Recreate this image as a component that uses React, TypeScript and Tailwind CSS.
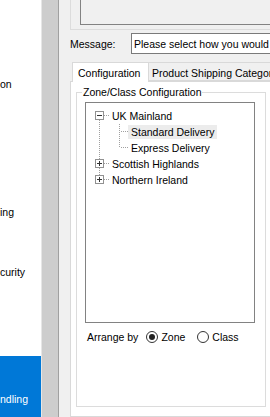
import React from "react";

const font = { fontFamily: '"Liberation Sans", Arial, sans-serif' };

type NodeProps = {
  kind: "minus" | "plus";
  up?: boolean;
  down?: boolean;
};

// expander box + dotted connectors for a top level row
const Expander: React.FC<NodeProps> = ({ kind, up, down }) => (
  <svg width="26" height="16" className="shrink-0">
    {up && <path d="M13.5 0 V3" stroke="#a0a0a0" strokeDasharray="1 1" />}
    {down && <path d="M13.5 12 V16" stroke="#a0a0a0" strokeDasharray="1 1" />}
    <path d="M18 7.5 H24" stroke="#a0a0a0" strokeDasharray="1 1" />
    <rect x="9.5" y="3.5" width="8" height="8" fill="#fff" stroke="#919191" />
    <path d="M11 7.5 H16" stroke="#333" />
    {kind === "plus" && <path d="M13.5 5 V10" stroke="#333" />}
  </svg>
);

const ChildLines: React.FC<{ last?: boolean }> = ({ last }) => (
  <>
    <svg width="26" height="16" className="shrink-0">
      <path d="M13.5 0 V16" stroke="#a0a0a0" strokeDasharray="1 1" />
    </svg>
    <svg width="16" height="16" className="shrink-0">
      <path d={last ? "M7.5 0 V8" : "M7.5 0 V16"} stroke="#a0a0a0" strokeDasharray="1 1" />
      <path d="M9 7.5 H16" stroke="#a0a0a0" strokeDasharray="1 1" />
    </svg>
  </>
);

const Radio: React.FC<{ checked?: boolean; label: string; className?: string }> = ({ checked, label, className }) => (
  <span className={"flex items-center " + (className ?? "")}>
    <span className="w-[12px] h-[12px] rounded-full border border-[#333] bg-white flex items-center justify-center">
      {checked && <span className="w-[6px] h-[6px] rounded-full bg-[#222]" />}
    </span>
    <span className="ml-[3px]">{label}</span>
  </span>
);

export default function App() {
  return (
    <div className="w-[270px] h-[417px] overflow-hidden flex bg-white text-[10.5px] leading-[14px] text-black" style={font}>
      {/* left nav, scrolled sideways */}
      <div className="w-[41px] shrink-0 overflow-hidden flex flex-col whitespace-nowrap">
        <div className="pt-[77px]">on</div>
        <div className="mt-[114px]">ing</div>
        <div className="mt-[46px]">curity</div>
        <div className="mt-[77px] h-[70px] bg-[#0078d7] text-white pt-[36px]">ndling</div>
      </div>

      {/* scrollbar */}
      <div className="w-[17px] shrink-0 bg-[#cdcdcd] border-l border-[#e6e6e6] border-r-white" />

      {/* main panel */}
      <div className="w-[240px] shrink-0 bg-[#f0f0f0] border-l border-[#a0a0a0] pl-[11px] flex flex-col">
        {/* top group */}
        <div className="h-[30px] border-l border-b border-[#dcdcdc] pl-[9px] pb-[4px]">
          <div className="h-full border-l border-b border-[#828282]" />
        </div>

        {/* message row */}
        <div className="mt-[3px] h-[21px] flex items-center">
          <span className="w-[61px] shrink-0">Message:</span>
          <div className="flex-1 h-full bg-white border border-[#7a7a7a] pl-[2px] flex items-center whitespace-nowrap overflow-hidden">
            Please select how you would like to configure shipping
          </div>
        </div>

        {/* tabs */}
        <div className="mt-[8px] ml-[2px] flex whitespace-nowrap -mb-px relative z-10">
          <div className="w-[77px] h-[20px] bg-white border-t border-l border-r border-[#d9d9d9] pl-[5px] pt-[3px]">
            Configuration
          </div>
          <div className="h-[19px] bg-[#f0f0f0] border-t border-r border-b border-[#d9d9d9] pl-[3px] pr-[6px] pt-[3px]">
            Product Shipping Categories
          </div>
        </div>

        {/* tab page */}
        <div className="w-[201px] h-[336px] bg-white border border-[#d9d9d9] pl-[5px]">
          <fieldset className="mt-[3px] w-[190px] h-[322px] border border-[#dcdcdc]">
            <legend className="ml-[5px] px-[1px] leading-[14px]">Zone/Class Configuration</legend>

            {/* tree */}
            <div className="mt-[3px] ml-[8px] w-[170px] h-[221px] border border-[#828282] bg-white pt-[5px] whitespace-nowrap">
              <div className="h-[16px] flex items-center">
                <Expander kind="minus" down />
                <span>UK Mainland</span>
              </div>
              <div className="h-[16px] flex items-center">
                <ChildLines />
                <span className="bg-[#ececec] px-[3px] leading-[14px]">Standard Delivery</span>
              </div>
              <div className="h-[16px] flex items-center">
                <ChildLines last />
                <span className="px-[3px]">Express Delivery</span>
              </div>
              <div className="h-[16px] flex items-center">
                <Expander kind="plus" up down />
                <span>Scottish Highlands</span>
              </div>
              <div className="h-[16px] flex items-center">
                <Expander kind="plus" up />
                <span>Northern Ireland</span>
              </div>
            </div>

            {/* arrange by */}
            <div className="mt-[7px] ml-[10px] flex items-center whitespace-nowrap">
              <span>Arrange by</span>
              <Radio checked label="Zone" className="ml-[8px]" />
              <Radio label="Class" className="ml-[12px]" />
            </div>
          </fieldset>
        </div>
      </div>
    </div>
  );
}
